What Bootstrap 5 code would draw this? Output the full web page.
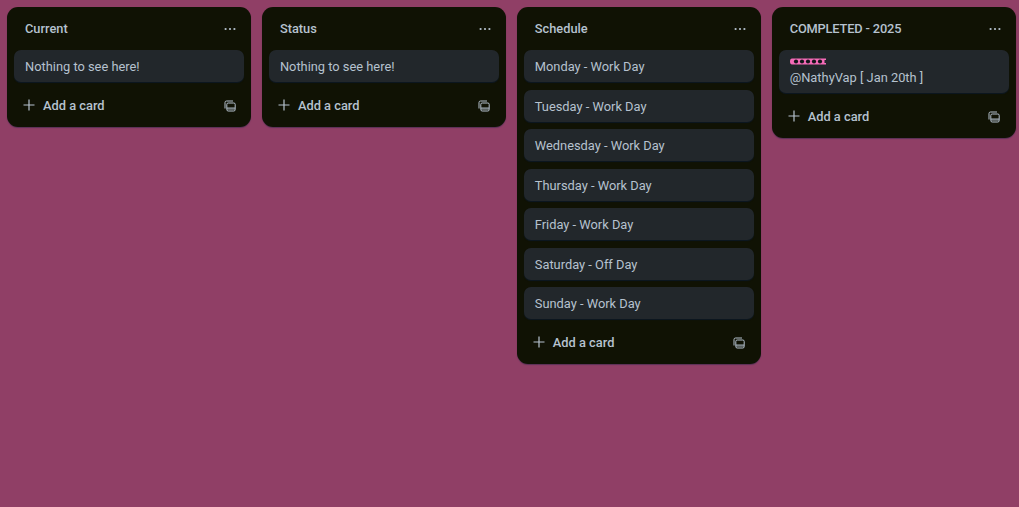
<!DOCTYPE html>
<html lang="en">
<head>
    <meta charset="UTF-8">
    <meta name="viewport" content="width=device-width, initial-scale=1.0">
    <title>Board</title>
    <link rel="stylesheet" href="https://cdn.jsdelivr.net/npm/bootstrap@5.3.0/dist/css/bootstrap.min.css">
    <style>
        body {
            background: #903f66;
            font-family: Roboto, "Noto Sans", sans-serif;
            font-size: 12.85px;
            color: #b6c2cf;
            height: 507px;
            overflow: hidden;
        }
        .board { padding: 7px; gap: 10.9px; }
        .board-list {
            width: 244px;
            flex-shrink: 0;
            background: #101204;
            border-radius: 11px;
            box-shadow: 0 1px 1px rgba(9, 30, 66, .4);
        }
        .list-head { height: 43px; padding: 1px 15px 0 18px; }
        .list-title { font-weight: 500; font-size: 12.8px; }
        .title-caps { letter-spacing: -.15px; }
        .list-cards { padding: 0 7px; gap: 7.5px; }
        .task {
            background: #22272b;
            border-radius: 7px;
            padding: 8px 11px 6px;
            min-height: 32px;
            line-height: 18px;
            box-shadow: 0 1px 1px rgba(9, 30, 66, .5);
        }
        .task-label { display: block; height: 11px; }
        .list-foot { height: 45px; padding: 2px 15.5px 0 16px; }
        .add-text { font-weight: 500; font-size: 12.85px; }
    </style>
</head>
<body>
<div class="board d-flex align-items-start">

    <div class="board-list">
        <div class="list-head d-flex align-items-center justify-content-between">
            <span class="list-title">Current</span>
            <svg width="12" height="4" viewBox="0 0 12 4" fill="#b6c2cf"><circle cx="1.6" cy="2" r="1.1"/><circle cx="6" cy="2" r="1.1"/><circle cx="10.4" cy="2" r="1.1"/></svg>
        </div>
        <div class="list-cards d-flex flex-column">
            <div class="task">Nothing to see here!</div>
        </div>
        <div class="list-foot d-flex align-items-center justify-content-between">
            <span class="d-flex align-items-center gap-2">
                <svg width="12" height="12" viewBox="0 0 12 12" stroke="#b6c2cf" stroke-width="1.2"><path d="M6 .5v11M.5 6h11"/></svg>
                <span class="add-text">Add a card</span>
            </span>
            <svg width="12" height="12" viewBox="0 0 12 12" fill="none" stroke="#b6c2cf"><path d="M1 8.5V2.5Q1 1 2.5 1H9"/><rect x="2.8" y="3" width="8.4" height="8" rx="1.4"/><path d="M3 8.5h8" stroke-width="2.4" opacity=".65"/></svg>
        </div>
    </div>

    <div class="board-list">
        <div class="list-head d-flex align-items-center justify-content-between">
            <span class="list-title">Status</span>
            <svg width="12" height="4" viewBox="0 0 12 4" fill="#b6c2cf"><circle cx="1.6" cy="2" r="1.1"/><circle cx="6" cy="2" r="1.1"/><circle cx="10.4" cy="2" r="1.1"/></svg>
        </div>
        <div class="list-cards d-flex flex-column">
            <div class="task">Nothing to see here!</div>
        </div>
        <div class="list-foot d-flex align-items-center justify-content-between">
            <span class="d-flex align-items-center gap-2">
                <svg width="12" height="12" viewBox="0 0 12 12" stroke="#b6c2cf" stroke-width="1.2"><path d="M6 .5v11M.5 6h11"/></svg>
                <span class="add-text">Add a card</span>
            </span>
            <svg width="12" height="12" viewBox="0 0 12 12" fill="none" stroke="#b6c2cf"><path d="M1 8.5V2.5Q1 1 2.5 1H9"/><rect x="2.8" y="3" width="8.4" height="8" rx="1.4"/><path d="M3 8.5h8" stroke-width="2.4" opacity=".65"/></svg>
        </div>
    </div>

    <div class="board-list">
        <div class="list-head d-flex align-items-center justify-content-between">
            <span class="list-title">Schedule</span>
            <svg width="12" height="4" viewBox="0 0 12 4" fill="#b6c2cf"><circle cx="1.6" cy="2" r="1.1"/><circle cx="6" cy="2" r="1.1"/><circle cx="10.4" cy="2" r="1.1"/></svg>
        </div>
        <div class="list-cards d-flex flex-column">
            <div class="task">Monday - Work Day</div>
            <div class="task">Tuesday - Work Day</div>
            <div class="task">Wednesday - Work Day</div>
            <div class="task">Thursday - Work Day</div>
            <div class="task">Friday - Work Day</div>
            <div class="task">Saturday - Off Day</div>
            <div class="task">Sunday - Work Day</div>
        </div>
        <div class="list-foot d-flex align-items-center justify-content-between">
            <span class="d-flex align-items-center gap-2">
                <svg width="12" height="12" viewBox="0 0 12 12" stroke="#b6c2cf" stroke-width="1.2"><path d="M6 .5v11M.5 6h11"/></svg>
                <span class="add-text">Add a card</span>
            </span>
            <svg width="12" height="12" viewBox="0 0 12 12" fill="none" stroke="#b6c2cf"><path d="M1 8.5V2.5Q1 1 2.5 1H9"/><rect x="2.8" y="3" width="8.4" height="8" rx="1.4"/><path d="M3 8.5h8" stroke-width="2.4" opacity=".65"/></svg>
        </div>
    </div>

    <div class="board-list">
        <div class="list-head d-flex align-items-center justify-content-between">
            <span class="list-title title-caps">COMPLETED - 2025</span>
            <svg width="12" height="4" viewBox="0 0 12 4" fill="#b6c2cf"><circle cx="1.6" cy="2" r="1.1"/><circle cx="6" cy="2" r="1.1"/><circle cx="10.4" cy="2" r="1.1"/></svg>
        </div>
        <div class="list-cards d-flex flex-column">
            <div class="task">
                <span class="task-label">
                    <svg class="d-block" width="36" height="7" viewBox="0 0 36 7"><path d="M2 .5H36V2H34.500V5H36V6.500H2Q0 6.500 0 3.500T2 .5Z" fill="#f66bb8"/><g fill="#14161a"><circle cx="6" cy="3.500" r="2.100"/><circle cx="12" cy="3.500" r="2.100"/><circle cx="18" cy="3.500" r="2.100"/><circle cx="24" cy="3.500" r="2.100"/><circle cx="30" cy="3.500" r="2.100"/></g></svg>
                </span>
                @NathyVap [ Jan 20th ]
            </div>
        </div>
        <div class="list-foot d-flex align-items-center justify-content-between">
            <span class="d-flex align-items-center gap-2">
                <svg width="12" height="12" viewBox="0 0 12 12" stroke="#b6c2cf" stroke-width="1.2"><path d="M6 .5v11M.5 6h11"/></svg>
                <span class="add-text">Add a card</span>
            </span>
            <svg width="12" height="12" viewBox="0 0 12 12" fill="none" stroke="#b6c2cf"><path d="M1 8.5V2.5Q1 1 2.5 1H9"/><rect x="2.8" y="3" width="8.4" height="8" rx="1.4"/><path d="M3 8.5h8" stroke-width="2.4" opacity=".65"/></svg>
        </div>
    </div>

</div>
<script src="https://cdn.jsdelivr.net/npm/bootstrap@5.3.0/dist/js/bootstrap.bundle.min.js"></script>
</body>
</html>
